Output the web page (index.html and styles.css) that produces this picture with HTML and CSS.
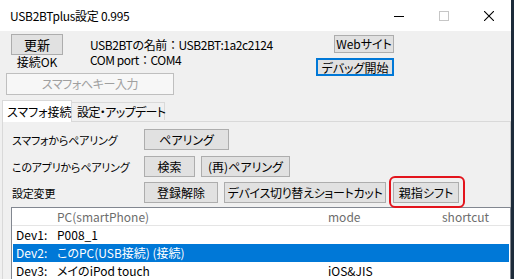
FILE: index.html
```html
<!DOCTYPE html>
<html lang="ja">
<head>
    <meta charset="UTF-8">
    <title>USB2BTplus設定 0.995</title>
    <link rel="stylesheet" href="styles.css">
</head>
<body>
<div class="window">
    <div class="titlebar">
        <span class="title">USB2BTplus設定&nbsp;0.995</span>
        <div class="caption">
            <span class="cap"><svg width="10" height="10" viewBox="0 0 10 10"><path d="M0 5.5h10" stroke="#000" stroke-width="1"/></svg></span>
            <span class="cap"><svg width="10" height="10" viewBox="0 0 10 10"><rect x="0.5" y="0.5" width="9" height="9" fill="none" stroke="#c6c6c6"/></svg></span>
            <span class="cap"><svg width="10" height="10" viewBox="0 0 10 10"><path d="M0 0L10 10M10 0L0 10" stroke="#000" stroke-width="1.1"/></svg></span>
        </div>
    </div>

    <div class="client">
        <div class="top">
            <button class="btn btn-refresh">更新</button>
            <div class="status">接続OK</div>
            <div class="info">
                <div class="line">USB2BTの名前：USB2BT:1a2c2124</div>
                <div class="line">COM port：COM4</div>
            </div>
            <div class="side">
                <button class="btn btn-web">Webサイト</button>
                <button class="btn btn-debug">デバッグ開始</button>
            </div>
            <button class="btn btn-keys" disabled>スマフォへキー入力</button>
        </div>

        <div class="tabs">
            <span class="tab active">スマフォ接続</span>
            <span class="tab">設定・アップデート</span>
        </div>

        <div class="panel">
            <div class="row row1">
                <span class="label">スマフォからペアリング</span>
                <button class="btn w-pair">ペアリング</button>
            </div>
            <div class="row row2">
                <span class="label">このアプリからペアリング</span>
                <button class="btn w-search">検索</button>
                <button class="btn w-repair">(再)ペアリング</button>
            </div>
            <div class="row row3">
                <span class="label">設定変更</span>
                <button class="btn w-unreg">登録解除</button>
                <button class="btn w-shortcut">デバイス切り替えショートカット</button>
                <span class="marked"><button class="btn w-thumb">親指シフト</button></span>
            </div>

            <div class="list">
                <div class="lrow lhead">
                    <span class="c0"></span>
                    <span class="c1">PC(smartPhone)</span>
                    <span class="c2">mode</span>
                    <span class="c3">shortcut</span>
                </div>
                <div class="lrow">
                    <span class="c0">Dev1:</span>
                    <span class="c1">P008_1</span>
                    <span class="c2"></span>
                    <span class="c3"></span>
                </div>
                <div class="lrow selected">
                    <span class="c0">Dev2:</span>
                    <span class="c1">このPC(USB接続) (接続)</span>
                    <span class="c2"></span>
                    <span class="c3"></span>
                </div>
                <div class="lrow">
                    <span class="c0">Dev3:</span>
                    <span class="c1">メイのiPod touch</span>
                    <span class="c2">iOS&amp;JIS</span>
                    <span class="c3"></span>
                </div>
            </div>
        </div>
    </div>
</div>
</body>
</html>
```

FILE: styles.css
```css
html, body {
    margin: 0;
    padding: 0;
    height: 279px;
    overflow: hidden;
    background-color: #1d2b3a;
}
body {
    font-family: "Noto Sans CJK JP", "Noto Sans", sans-serif;
    font-size: 12px;
    font-feature-settings: "palt";
    color: #000;
    white-space: nowrap;
}
.window {
    width: 511px;
    height: 279px;
    background-color: #f0f0f0;
    overflow: hidden;
}

/* title bar */
.titlebar {
    height: 31px;
    background-color: #fff;
    display: flex;
    align-items: center;
    justify-content: space-between;
}
.title {
    padding-left: 10px;
    font-size: 12px;
    line-height: 16px;
    letter-spacing: -0.3px;
    font-feature-settings: normal;
}
.caption {
    display: flex;
    height: 31px;
}
.cap {
    width: 45px;
    display: flex;
    align-items: center;
    justify-content: center;
}

/* buttons */
.btn {
    font-family: inherit;
    font-size: 12px;
    font-feature-settings: "palt";
    white-space: nowrap;
    line-height: 16px;
    color: #000;
    background-color: #e1e1e1;
    border: 1px solid #adadad;
    padding: 0;
    margin: 0;
    box-sizing: border-box;
    height: 21px;
}
.btn:disabled {
    background-color: #f7f7f7;
    border-color: #bfbfbf;
    color: #a0a0a0;
}

/* top area */
.client {
    padding-left: 6px;
}
.top {
    display: grid;
    grid-template-columns: 84px 226px 78px;
    grid-template-rows: 21px 14px auto;
    padding-top: 3px;
}
.btn-refresh {
    grid-column: 1;
    grid-row: 1;
    width: 52px;
    margin-left: 5px;
    font-size: 13px;
}
.status {
    grid-column: 1;
    grid-row: 2;
    width: 52px;
    margin-left: 5px;
    text-align: center;
    line-height: 14px;
    font-size: 12px;
}
.info {
    grid-column: 2;
    grid-row: 1 / 3;
    padding-top: 3px;
    letter-spacing: -0.45px;
    font-feature-settings: normal;
}
.info .line {
    height: 15px;
    line-height: 15px;
    overflow: hidden;
}
.side {
    grid-column: 3;
    grid-row: 1 / 4;
    display: flex;
    flex-direction: column;
    align-items: flex-end;
    gap: 5px;
    padding-top: 1px;
}
.btn-web {
    width: 60px;
    height: 18px;
    line-height: 14px;
}
.btn-debug {
    width: 78px;
    height: 18px;
    line-height: 13px;
    border: 2px solid #0078d7;
}
.btn-keys {
    grid-column: 1 / 4;
    grid-row: 3;
    width: 168px;
    height: 22px;
    margin-top: 4px;
    letter-spacing: -0.4px;
}

/* tabs */
.tabs {
    display: flex;
    align-items: flex-end;
    margin: 5px 0 0 -4px;
    position: relative;
    z-index: 1;
}
.tab {
    height: 18px;
    line-height: 17px;
    box-sizing: border-box;
    border: 1px solid #d9d9d9;
    border-left: none;
    border-bottom: none;
    background-color: #f0f0f0;
    margin-bottom: 1px;
}
.tab.active {
    height: 22px;
    width: 70px;
    padding-left: 4px;
    line-height: 21px;
    border-left: 1px solid #d9d9d9;
    background-color: #fff;
    margin-bottom: -1px;
}
.tab:not(.active) {
    width: 93px;
    padding-left: 5px;
    letter-spacing: -0.6px;
}

/* tab page */
.panel {
    margin-left: -4px;
    width: 509px;
    height: 170px;
    border: 1px solid #d9d9d9;
    border-right-color: #c8c8c8;
    background-color: #f0f0f0;
    padding: 7px 0 0 8px;
    box-sizing: border-box;
}
.row {
    display: flex;
    align-items: center;
    gap: 6px;
    height: 21px;
}
.row2 {
    margin-top: 6px;
}
.row3 {
    margin-top: 5px;
}
.label {
    width: 126px;
    padding-left: 1px;
    font-size: 11px;
    letter-spacing: -0.2px;
}
.w-pair { width: 85px; }
.w-search { width: 51px; }
.w-repair { width: 89px; }
.w-unreg { width: 74px; }
.w-shortcut { width: 162px; letter-spacing: -0.3px; }
.w-thumb { width: 66px; }

.marked {
    position: relative;
    display: flex;
    margin-left: 1px;
}
.marked::after {
    content: "";
    position: absolute;
    top: -6px;
    left: -4px;
    right: -6px;
    bottom: -5px;
    border: 2px solid #e3141c;
    border-radius: 6px;
}

/* list view */
.list {
    margin-top: 4px;
    width: 500px;
    height: 80px;
    border: 1px solid #828790;
    background-color: #fff;
    box-sizing: border-box;
    padding: 0 1px;
}
.lrow {
    display: flex;
    height: 18px;
    line-height: 18px;
}
.lhead {
    height: 17px;
    line-height: 17px;
    color: #6d6d6d;
    border-bottom: 1px solid #e5e5e5;
    margin: 0 -1px;
    padding: 0 1px;
}
.lrow span {
    padding-left: 3px;
    box-sizing: border-box;
    overflow: hidden;
}
.c0 { width: 41px; }
.c1 { width: 271px; }
.c2 { width: 114px; }
.c3 { flex: 1; }
.selected {
    background-color: #0078d7;
    color: #fff;
}
```
